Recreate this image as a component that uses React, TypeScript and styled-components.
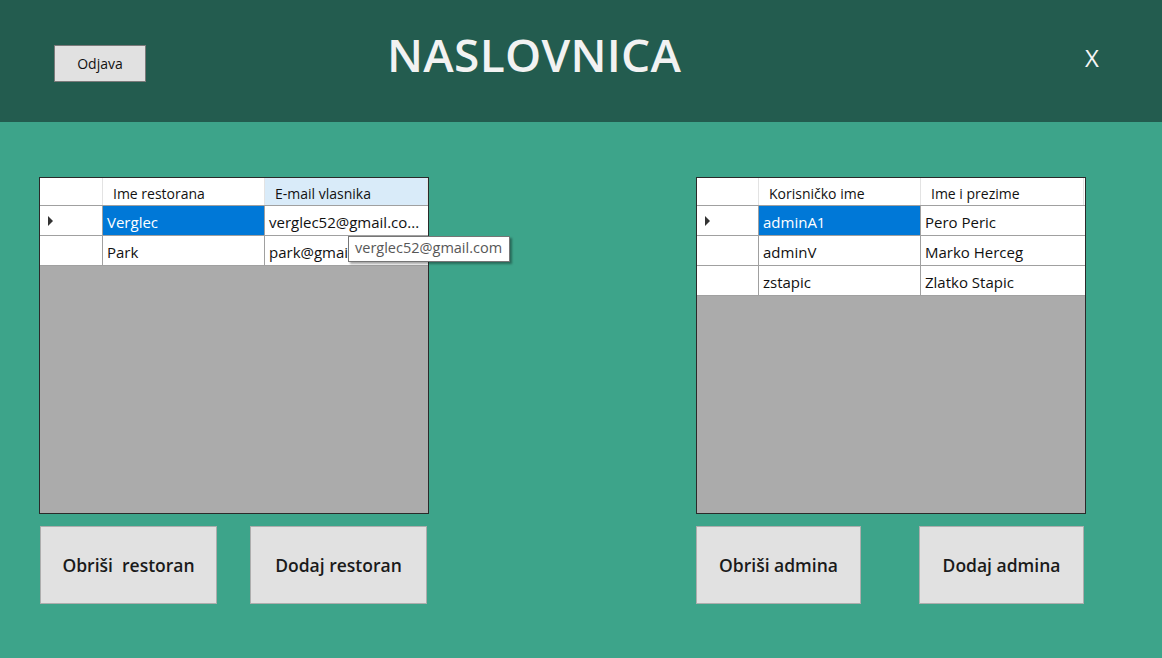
import * as React from 'react'
import styled, { createGlobalStyle } from 'styled-components'

const GlobalStyle = createGlobalStyle`
  html, body {
    margin: 0;
    padding: 0;
    background: #3da48a;
  }
  * {
    box-sizing: border-box;
  }
`

const Page = styled.div`
  width: 1162px;
  height: 658px;
  display: flex;
  flex-direction: column;
  background: #3da48a;
  font-family: 'Open Sans', 'Noto Sans', sans-serif;
  overflow: hidden;
`

const Header = styled.header`
  height: 122px;
  background: #235c4f;
  display: flex;
  align-items: flex-start;
  padding: 0 0 0 54px;
`

const LogoutButton = styled.button`
  width: 92px;
  height: 37px;
  margin-top: 45px;
  border: 1px solid #7a7a7a;
  background: #e1e1e1;
  font-family: 'Open Sans', sans-serif;
  font-size: 14px;
  color: #111;
  padding: 0;
`

const Title = styled.h1`
  margin: 26px 0 0 241px;
  font-family: 'Open Sans', sans-serif;
  font-weight: 600;
  font-size: 46px;
  letter-spacing: 0.3px;
  color: #f2f2f2;
  line-height: 56px;
`

const CloseButton = styled.span`
  margin: 41px 0 0 auto;
  width: 77px;
  font-family: 'Open Sans', sans-serif;
  font-size: 24px;
  color: #f5f5f5;
`

const Body = styled.main`
  display: flex;
  padding: 55px 0 0 39px;
  gap: 267px;
`

const Panel = styled.section`
  width: 390px;
  display: flex;
  flex-direction: column;
  gap: 12px;
`

const GridBox = styled.div`
  position: relative;
  height: 337px;
  border: 1px solid #2a2a2a;
  background: #ababab;
`

const Row = styled.div<{ cols: string }>`
  display: grid;
  grid-template-columns: ${p => p.cols};
  height: 30px;
  background: #fff;
  border-bottom: 1px solid #a0a0a0;
  &:first-child {
    height: 28px;
  }
`

const HeaderCell = styled.div<{ hot?: boolean }>`
  display: flex;
  align-items: center;
  border-right: 1px solid #e3e3e3;
  background: ${p => (p.hot ? '#d9ebf9' : '#fff')};
  font-family: 'Open Sans', sans-serif;
  font-size: 14px;
  color: #111;
  padding: 3px 0 0 10px;
  white-space: nowrap;
`

const RowHead = styled.div`
  border-right: 1px solid #a0a0a0;
  position: relative;
`

const Pointer = styled.span`
  position: absolute;
  left: 8px;
  top: 10px;
  width: 0;
  height: 0;
  border-top: 5px solid transparent;
  border-bottom: 5px solid transparent;
  border-left: 5px solid #333;
`

const Cell = styled.div<{ selected?: boolean }>`
  display: flex;
  align-items: center;
  border-right: 1px solid #a0a0a0;
  background: ${p => (p.selected ? '#0078d7' : '#fff')};
  color: ${p => (p.selected ? '#fff' : '#111')};
  font-family: 'Open Sans', sans-serif;
  font-size: 15px;
  padding: 3px 0 0 4px;
  white-space: nowrap;
  overflow: hidden;
  &:last-child {
    border-right: none;
  }
`

const Tooltip = styled.div`
  position: absolute;
  left: 308px;
  top: 58px;
  height: 26px;
  padding: 1px 7px 0 6px;
  background: #fff;
  border: 1px solid #767676;
  box-shadow: 2px 2px 2px rgba(0, 0, 0, 0.35);
  font-family: 'Open Sans', sans-serif;
  font-size: 14.5px;
  color: #575757;
  white-space: nowrap;
`

const Buttons = styled.div<{ pad: string }>`
  display: flex;
  justify-content: space-between;
  padding: ${p => p.pad};
`

const ActionButton = styled.button<{ w: number }>`
  width: ${p => p.w}px;
  height: 78px;
  border: 1px solid #adadad;
  background: #e1e1e1;
  font-family: 'Open Sans', sans-serif;
  font-weight: 600;
  font-size: 17.5px;
  color: #1a1a1a;
  white-space: pre;
  padding: 0;
`

interface GridProps {
  cols: string
  headers: string[]
  hotHeader?: number
  rows: string[][]
  children?: React.ReactNode
}

const DataGrid: React.FC<GridProps> = ({ cols, headers, hotHeader, rows, children }) => (
  <GridBox>
    <Row cols={cols}>
      <HeaderCell />
      {headers.map((h, i) => (
        <HeaderCell key={h} hot={i === hotHeader}>
          {h}
        </HeaderCell>
      ))}
    </Row>
    {rows.map((r, ri) => (
      <Row cols={cols} key={ri}>
        <RowHead>{ri === 0 && <Pointer />}</RowHead>
        {r.map((c, ci) => (
          <Cell key={ci} selected={ri === 0 && ci === 0}>
            {c}
          </Cell>
        ))}
      </Row>
    ))}
    {children}
  </GridBox>
)

const App: React.FC = () => (
  <Page>
    <GlobalStyle />
    <Header>
      <LogoutButton>Odjava</LogoutButton>
      <Title>NASLOVNICA</Title>
      <CloseButton>X</CloseButton>
    </Header>
    <Body>
      <Panel>
        <DataGrid
          cols="63px 162px 163px"
          headers={['Ime restorana', 'E-mail vlasnika']}
          hotHeader={1}
          rows={[
            ['Verglec', 'verglec52@gmail.co...'],
            ['Park', 'park@gmail.com'],
          ]}
        >
          <Tooltip>verglec52@gmail.com</Tooltip>
        </DataGrid>
        <Buttons pad="0 2px 0 1px">
          <ActionButton w={177}>Obriši  restoran</ActionButton>
          <ActionButton w={177}>Dodaj restoran</ActionButton>
        </Buttons>
      </Panel>
      <Panel>
        <DataGrid
          cols="62px 162px 163px"
          headers={['Korisničko ime', 'Ime i prezime']}
          rows={[
            ['adminA1', 'Pero Peric'],
            ['adminV', 'Marko Herceg'],
            ['zstapic', 'Zlatko Stapic'],
          ]}
        />
        <Buttons pad="0 2px 0 0">
          <ActionButton w={165}>Obriši admina</ActionButton>
          <ActionButton w={165}>Dodaj admina</ActionButton>
        </Buttons>
      </Panel>
    </Body>
  </Page>
)

export default App
